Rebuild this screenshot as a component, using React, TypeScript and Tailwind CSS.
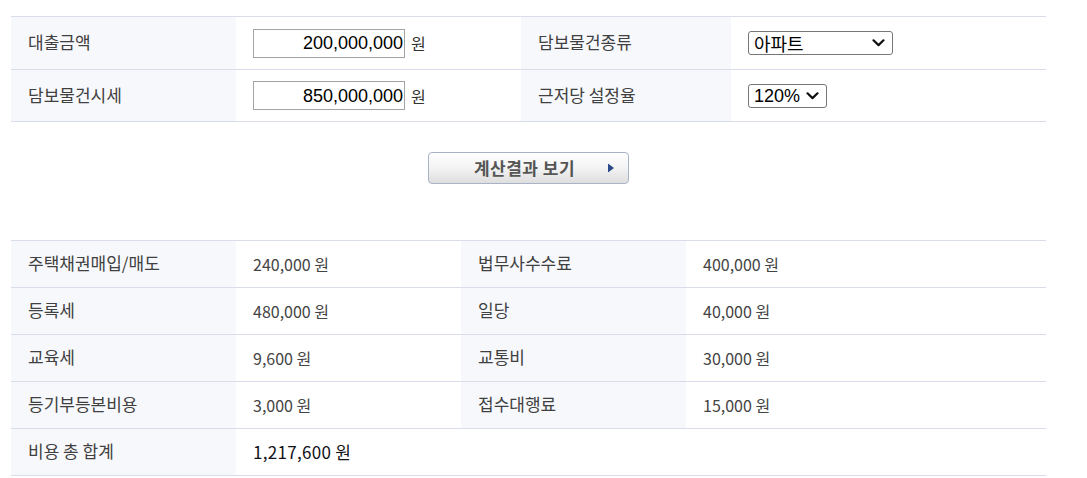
import React from "react";

const KR = { fontFamily: '"Noto Sans CJK KR", "Noto Sans", sans-serif' };
const AR = { fontFamily: '"Liberation Sans", Arial, sans-serif' };

function Chevron() {
  return (
    <svg width="13" height="9" viewBox="0 0 13 9" className="pointer-events-none absolute right-[7px] top-1/2 -translate-y-1/2">
      <path d="M1.5 1.8 L6.5 6.6 L11.5 1.8" fill="none" stroke="#111" strokeWidth="2.2" strokeLinecap="round" strokeLinejoin="round" />
    </svg>
  );
}

function Select({ value, width }: { value: string; width: string }) {
  return (
    <div className={`relative ${width} h-[24px] rounded-[3px] border border-[#767676] bg-white flex items-center pl-[5px]`}>
      <span className="text-[18px] leading-none text-black" style={value.match(/[가-힣]/) ? KR : AR}>
        {value}
      </span>
      <Chevron />
    </div>
  );
}

function Input({ value }: { value: string }) {
  return (
    <div className="flex items-center">
      <div className="w-[152px] h-[29px] border border-[#a3a3a3] bg-white flex items-center justify-end pr-[1px]">
        <span className="text-[18px] leading-none text-black" style={AR}>{value}</span>
      </div>
      <span className="ml-[6px] text-[16px] text-[#333]" style={KR}>원</span>
    </div>
  );
}

const labelCell = "bg-[#f7f8fc] flex items-center pl-[17px] text-[17px] text-[#404040] pb-[2px]";
const valueCell = "bg-white flex items-center pl-[17px]";

const results: [string, string, string, string][] = [
  ["주택채권매입/매도", "240,000 원", "법무사수수료", "400,000 원"],
  ["등록세", "480,000 원", "일당", "40,000 원"],
  ["교육세", "9,600 원", "교통비", "30,000 원"],
  ["등기부등본비용", "3,000 원", "접수대행료", "15,000 원"],
];

export default function App() {
  return (
    <div className="w-[1087px] h-[478px] bg-white overflow-hidden" style={KR}>
      <div className="ml-[11px] mt-[16px] w-[1035px]">
        {/* Input table */}
        <div className="border-t border-[#d9dcea]">
          <div className="grid grid-cols-[225px_285px_210px_315px] h-[53px] border-b border-[#d9dcea]">
            <div className={labelCell}>대출금액</div>
            <div className={valueCell}><Input value="200,000,000" /></div>
            <div className={labelCell}>담보물건종류</div>
            <div className={valueCell}><Select value="아파트" width="w-[145px]" /></div>
          </div>
          <div className="grid grid-cols-[225px_285px_210px_315px] h-[52px] border-b border-[#d9dcea]">
            <div className={labelCell}>담보물건시세</div>
            <div className={valueCell}><Input value="850,000,000" /></div>
            <div className={labelCell}>근저당 설정율</div>
            <div className={valueCell}><Select value="120%" width="w-[79px]" /></div>
          </div>
        </div>

        {/* Button */}
        <div className="flex justify-center mt-[30px]">
          <button className="relative w-[201px] h-[32px] rounded-[4px] border border-[#a8b3c8] bg-gradient-to-b from-[#ffffff] via-[#f3f3f3] to-[#dedede] flex items-center justify-center shadow-[inset_0_1px_0_#ffffff]">
            <span className="text-[17px] font-bold text-[#555555] tracking-[0.5px] -ml-[8px]" style={KR}>계산결과 보기</span>
            <svg width="6" height="9" viewBox="0 0 6 9" className="absolute right-[14px] top-1/2 -translate-y-1/2">
              <path d="M0 0 L6 4.5 L0 9 Z" fill="#2c4a8a" />
            </svg>
          </button>
        </div>

        {/* Result table */}
        <div className="mt-[56px] border-t border-[#d9dcea]">
          {results.map((r, i) => (
            <div key={i} className="grid grid-cols-[225px_225px_225px_360px] h-[47px] border-b border-[#d9dcea] text-[16px]">
              <div className={labelCell}>{r[0]}</div>
              <div className={`${valueCell} text-[#444]`}>{r[1]}</div>
              <div className={labelCell}>{r[2]}</div>
              <div className={`${valueCell} text-[#444]`}>{r[3]}</div>
            </div>
          ))}
          <div className="grid grid-cols-[225px_810px] h-[47px] border-b border-[#d9dcea]">
            <div className={labelCell}>비용 총 합계</div>
            <div className={`${valueCell} text-[17px] text-[#111118] font-normal tracking-[0.3px]`}>1,217,600 원</div>
          </div>
        </div>
      </div>
    </div>
  );
}
